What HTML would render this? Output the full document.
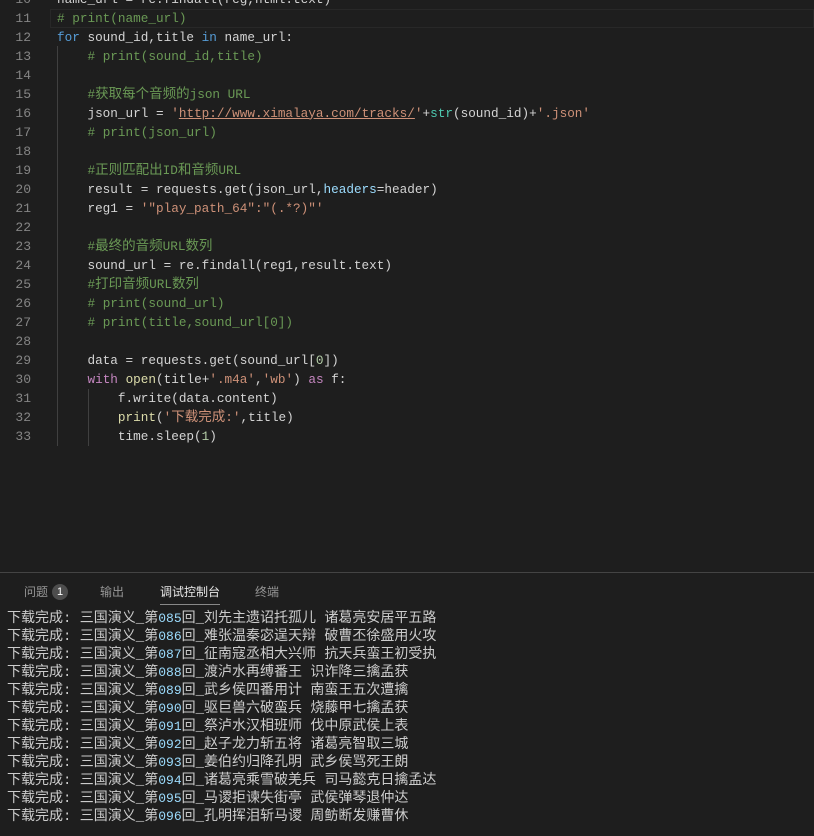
<!DOCTYPE html>
<html><head><meta charset="utf-8"><style>
body{margin:0;width:814px;height:835px;background:#1e1e1e;overflow:hidden;position:relative;font-family:"Liberation Mono","Noto Sans CJK SC",monospace;}
.ed{position:absolute;left:0;top:-10.5px;width:814px;}
.row{position:relative;height:19px;line-height:19px;font-size:12.7px;white-space:pre;color:#d4d4d4;}
.ln{position:absolute;left:0;width:31px;text-align:right;color:#858585;font-size:13px;}
.code{position:absolute;left:57px;}
.cur{position:absolute;left:50px;right:0;top:0;height:17px;border:1px solid #282828;}
.k{color:#569cd6}.p{color:#c586c0}.s{color:#ce9178}.c{color:#6a9955}.f{color:#dcdcaa}.t{color:#4ec9b0}.n{color:#b5cea8}.v{color:#9cdcfe}
.u{text-decoration:underline;}
.cj{font-size:13.5px}
.guide{position:absolute;width:1px;background:#404040;}
.panel{position:absolute;left:0;top:572px;width:814px;height:263px;border-top:1px solid #444;}
.tab{position:absolute;top:10px;font-family:"Liberation Sans","Noto Sans CJK SC",sans-serif;font-size:12px;color:#969696;}
.badge{display:inline-block;width:16px;height:16px;border-radius:8px;background:#4d4d4d;color:#fff;font-size:11px;text-align:center;line-height:16px;margin-left:4px;vertical-align:1px;}
.out{position:absolute;left:7px;top:37px;font-size:14px;line-height:18px;color:#cccccc;white-space:pre;}
.out b{font-weight:normal;color:#9cdcfe;font-size:13px}
</style></head><body>
<div class="guide" style="left:57px;top:46px;height:400px"></div>
<div class="guide" style="left:88px;top:389px;height:57px"></div>
<div class="ed">
<div class="row"><span class="ln">10</span><span class="code">name_url = re.findall(reg,html.text)</span></div>
<div class="row"><div class="cur"></div><span class="ln">11</span><span class="code c"># print(name_url)</span></div>
<div class="row"><span class="ln">12</span><span class="code"><span class="k">for</span> sound_id,title <span class="k">in</span> name_url:</span></div>
<div class="row"><span class="ln">13</span><span class="code">    <span class="c"># print(sound_id,title)</span></span></div>
<div class="row"><span class="ln">14</span></div>
<div class="row"><span class="ln">15</span><span class="code">    <span class="c">#<span class="cj">获取每个音频的</span>json URL</span></span></div>
<div class="row"><span class="ln">16</span><span class="code">    json_url = <span class="s">'<span class="u">http://www.ximalaya.com/tracks/</span>'</span>+<span class="t">str</span>(sound_id)+<span class="s">'.json'</span></span></div>
<div class="row"><span class="ln">17</span><span class="code">    <span class="c"># print(json_url)</span></span></div>
<div class="row"><span class="ln">18</span></div>
<div class="row"><span class="ln">19</span><span class="code">    <span class="c">#<span class="cj">正则匹配出</span>ID<span class="cj">和音频</span>URL</span></span></div>
<div class="row"><span class="ln">20</span><span class="code">    result = requests.get(json_url,<span class="v">headers</span>=header)</span></div>
<div class="row"><span class="ln">21</span><span class="code">    reg1 = <span class="s">'"play_path_64":"(.*?)"'</span></span></div>
<div class="row"><span class="ln">22</span></div>
<div class="row"><span class="ln">23</span><span class="code">    <span class="c">#<span class="cj">最终的音频</span>URL<span class="cj">数列</span></span></span></div>
<div class="row"><span class="ln">24</span><span class="code">    sound_url = re.findall(reg1,result.text)</span></div>
<div class="row"><span class="ln">25</span><span class="code">    <span class="c">#<span class="cj">打印音频</span>URL<span class="cj">数列</span></span></span></div>
<div class="row"><span class="ln">26</span><span class="code">    <span class="c"># print(sound_url)</span></span></div>
<div class="row"><span class="ln">27</span><span class="code">    <span class="c"># print(title,sound_url[0])</span></span></div>
<div class="row"><span class="ln">28</span></div>
<div class="row"><span class="ln">29</span><span class="code">    data = requests.get(sound_url[<span class="n">0</span>])</span></div>
<div class="row"><span class="ln">30</span><span class="code">    <span class="p">with</span> <span class="f">open</span>(title+<span class="s">'.m4a'</span>,<span class="s">'wb'</span>) <span class="p">as</span> f:</span></div>
<div class="row"><span class="ln">31</span><span class="code">        f.write(data.content)</span></div>
<div class="row"><span class="ln">32</span><span class="code">        <span class="f">print</span>(<span class="s">'<span class="cj">下载完成</span>:'</span>,title)</span></div>
<div class="row"><span class="ln">33</span><span class="code">        time.sleep(<span class="n">1</span>)</span></div>
</div>
<div class="panel">
<div class="tab" style="left:24px">问题<span class="badge">1</span></div>
<div class="tab" style="left:100px">输出</div>
<div class="tab" style="left:160px;color:#e7e7e7">调试控制台</div>
<div style="position:absolute;left:160px;top:31px;width:60px;height:1px;background:#888"></div>
<div class="tab" style="left:255px">终端</div>
<div class="out">下载完成: 三国演义_第<b>085</b>回_刘先主遗诏托孤儿 诸葛亮安居平五路
下载完成: 三国演义_第<b>086</b>回_难张温秦宓逞天辩 破曹丕徐盛用火攻
下载完成: 三国演义_第<b>087</b>回_征南寇丞相大兴师 抗天兵蛮王初受执
下载完成: 三国演义_第<b>088</b>回_渡泸水再缚番王 识诈降三擒孟获
下载完成: 三国演义_第<b>089</b>回_武乡侯四番用计 南蛮王五次遭擒
下载完成: 三国演义_第<b>090</b>回_驱巨兽六破蛮兵 烧藤甲七擒孟获
下载完成: 三国演义_第<b>091</b>回_祭泸水汉相班师 伐中原武侯上表
下载完成: 三国演义_第<b>092</b>回_赵子龙力斩五将 诸葛亮智取三城
下载完成: 三国演义_第<b>093</b>回_姜伯约归降孔明 武乡侯骂死王朗
下载完成: 三国演义_第<b>094</b>回_诸葛亮乘雪破羌兵 司马懿克日擒孟达
下载完成: 三国演义_第<b>095</b>回_马谡拒谏失街亭 武侯弹琴退仲达
下载完成: 三国演义_第<b>096</b>回_孔明挥泪斩马谡 周鲂断发赚曹休</div>
</div>
</body></html>
